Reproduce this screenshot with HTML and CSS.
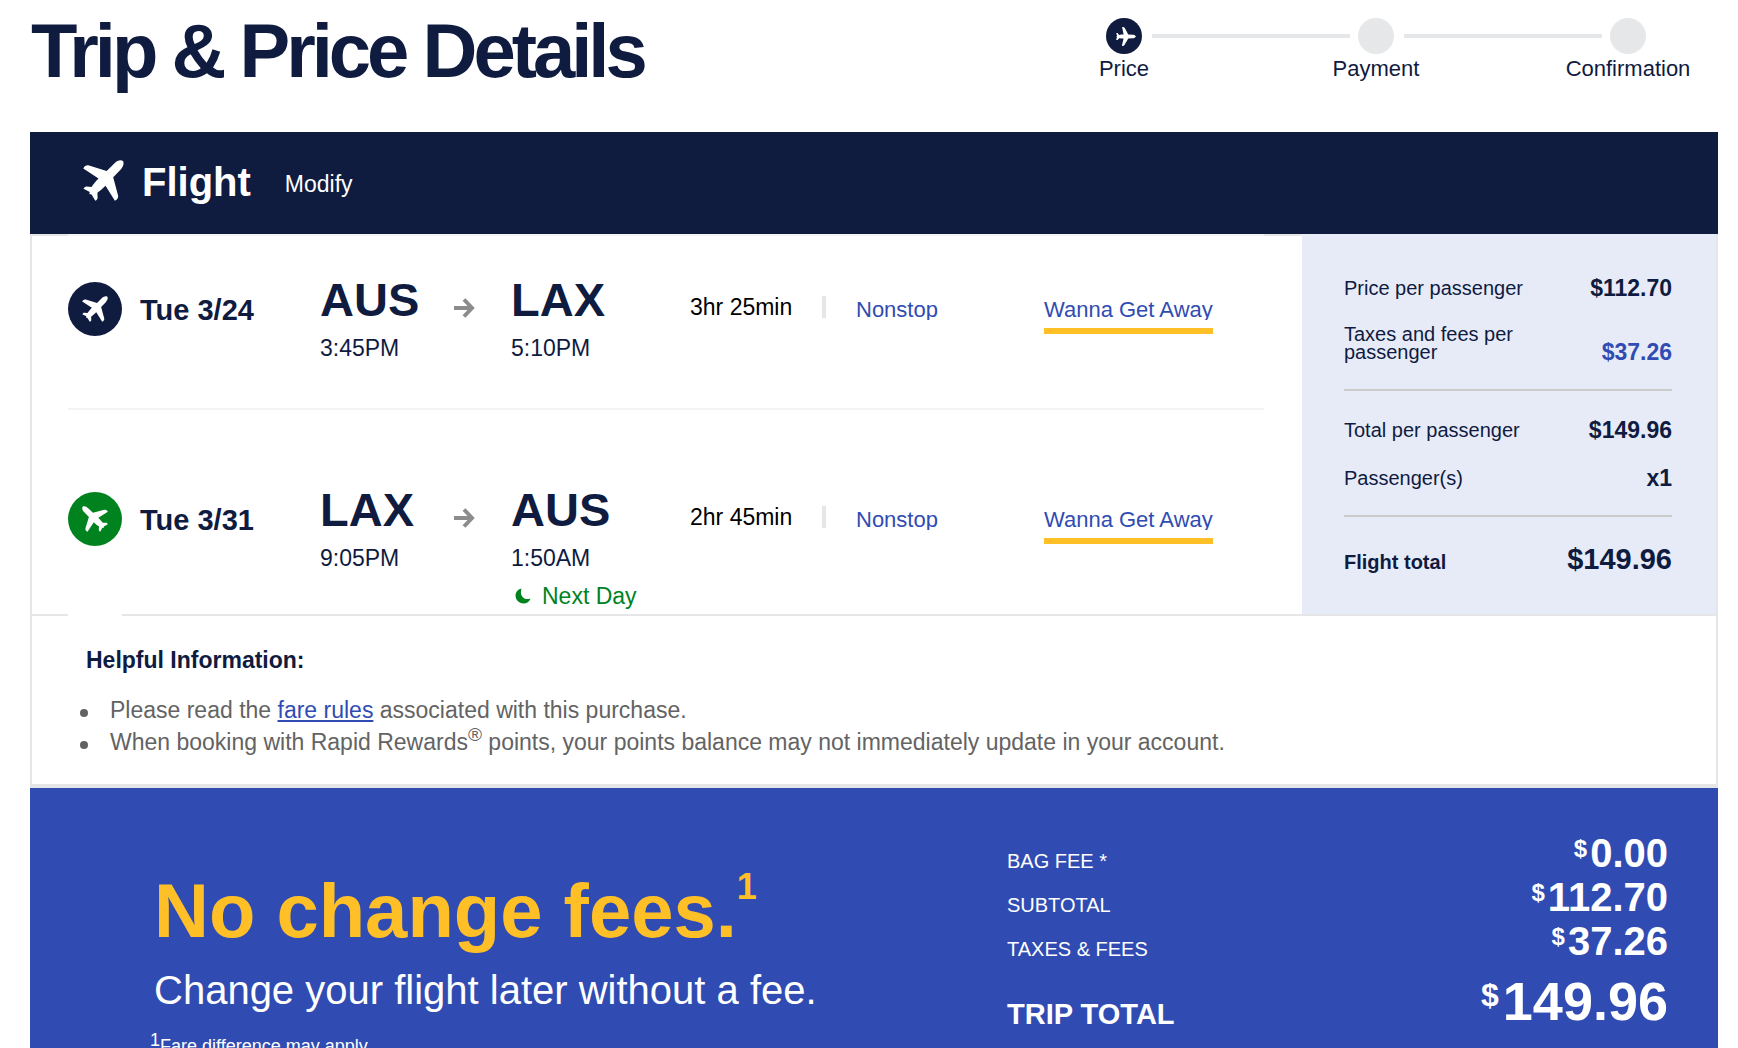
FILE: index.html
```html
<!DOCTYPE html>
<html lang="en">
<head>
  <meta charset="UTF-8">
  <meta name="viewport" content="width=device-width, initial-scale=1.0">
  <title>Trip &amp; Price Details</title>
  <link rel="stylesheet" href="styles.css">
</head>
<body>
  <!-- Shared icons -->
  <svg class="sprite" aria-hidden="true">
    <symbol id="plane" viewBox="0 0 41 41">
      <path d="M40 1C37.500 -.5 34 .8 31.500 3.300L23.700 10.900 6 5.500C3.500 4.900 1.500 6 .3 8.600L15.500 18.600C12.800 21.400 10.400 24.200 8.600 26.900L3.600 26.400C2.200 26.300 1.200 27.400 .5 28.800L6.800 32 6.300 34 8.600 34.500 12.300 40.700C13.800 39.900 14.700 38.900 14.600 37.500L14.400 32.700C17.200 30.700 19.900 28.300 22.500 25.700L31.900 40.800C34.300 39.600 35.600 37.700 35 35.200L30.200 17.300 37.500 9.700C40 7 41.400 3.500 40 1Z"/>
    </symbol>
  </svg>

  <header class="page-header">
    <h1>Trip &amp; Price Details</h1>
    <ol class="steps">
      <li class="step active">
        <span class="dot"><svg class="step-plane"><use href="#plane"/></svg></span>
        Price
      </li>
      <li class="line" aria-hidden="true"></li>
      <li class="step"><span class="dot"></span>Payment</li>
      <li class="line" aria-hidden="true"></li>
      <li class="step"><span class="dot"></span>Confirmation</li>
    </ol>
  </header>

  <main class="content">
    <div class="flight-bar">
      <svg class="bar-plane"><use href="#plane"/></svg>
      <h2>Flight</h2>
      <a href="#" class="modify">Modify</a>
    </div>

    <section class="card">
      <div class="summary">
        <div class="flights">
          <!-- Departing -->
          <article class="flight">
            <span class="badge"><svg><use href="#plane"/></svg></span>
            <h3 class="date">Tue 3/24</h3>
            <div class="stop">
              <div class="code">AUS</div>
              <div class="time">3:45PM</div>
            </div>
            <svg class="arrow" viewBox="0 0 22 22"><path d="M1 11H18M11 2.500 19 11 11 19.500"/></svg>
            <div class="stop">
              <div class="code">LAX</div>
              <div class="time">5:10PM</div>
            </div>
            <div class="duration">3hr 25min</div>
            <button class="link nonstop"><span>Nonstop</span></button>
            <button class="link fare"><span>Wanna Get Away</span></button>
          </article>

          <!-- Returning -->
          <article class="flight return">
            <span class="badge"><svg><use href="#plane"/></svg></span>
            <h3 class="date">Tue 3/31</h3>
            <div class="stop">
              <div class="code">LAX</div>
              <div class="time">9:05PM</div>
            </div>
            <svg class="arrow" viewBox="0 0 22 22"><path d="M1 11H18M11 2.500 19 11 11 19.500"/></svg>
            <div class="stop">
              <div class="code">AUS</div>
              <div class="time">1:50AM</div>
              <div class="next-day">
                <svg viewBox="0 0 16 16"><path d="M6.500 .5C2.500 1.500 .5 4.300 .5 7.600C.5 12 4 15.500 8.400 15.500C11.800 15.500 14.600 13.500 15.600 10.500C10 12.800 4 8.500 6.500 .5Z"/></svg>
                Next Day
              </div>
            </div>
            <div class="duration">2hr 45min</div>
            <button class="link nonstop"><span>Nonstop</span></button>
            <button class="link fare"><span>Wanna Get Away</span></button>
          </article>
        </div>

        <!-- Price panel -->
        <dl class="prices">
          <div class="price-row">
            <dt>Price per passenger</dt>
            <dd>$112.70</dd>
          </div>
          <div class="price-row">
            <dt>Taxes and fees per passenger</dt>
            <dd><a href="#">$37.26</a></dd>
          </div>
          <div class="price-row ruled">
            <dt>Total per passenger</dt>
            <dd>$149.96</dd>
          </div>
          <div class="price-row">
            <dt>Passenger(s)</dt>
            <dd>x1</dd>
          </div>
          <div class="price-row ruled flight-total">
            <dt>Flight total</dt>
            <dd>$149.96</dd>
          </div>
        </dl>
      </div>

      <div class="helpful">
        <h4>Helpful Information:</h4>
        <ul>
          <li>Please read the <a href="#">fare rules</a> associated with this purchase.</li>
          <li>When booking with Rapid Rewards<sup>®</sup> points, your points balance may not immediately update in your account.</li>
        </ul>
      </div>
    </section>

    <section class="total-bar">
      <div class="promo">
        <p class="promo-title">No change fees.<sup>1</sup></p>
        <p class="promo-sub">Change your flight later without a fee.</p>
        <p class="promo-note"><sup>1</sup>Fare difference may apply.</p>
      </div>
      <table class="totals">
        <tr><th scope="row">BAG FEE *</th><td><span>$</span>0.00</td></tr>
        <tr><th scope="row">SUBTOTAL</th><td><span>$</span>112.70</td></tr>
        <tr><th scope="row">TAXES &amp; FEES</th><td><span>$</span>37.26</td></tr>
        <tr class="trip-total"><th scope="row">TRIP TOTAL</th><td><span>$</span>149.96</td></tr>
      </table>
    </section>
  </main>
</body>
</html>
```
FILE: styles.css
```css
* {
  margin: 0;
  padding: 0;
  box-sizing: border-box;
}

body {
  font-family: "Liberation Sans", Arial, sans-serif;
  font-size: 23px;
  color: #0f1b3f;
  background: #fff;
  height: 100vh;
  overflow: hidden;
}

a, button {
  color: #304cb2;
  font-family: inherit;
}

ol, ul {
  list-style: none;
}

svg {
  display: block;
  fill: currentColor;
}

.sprite {
  display: none;
}

/* Header */
.page-header {
  display: flex;
  justify-content: space-between;
  align-items: flex-start;
  height: 132px;
  padding: 7px 48px 0 31px;
}

h1 {
  font-size: 76px;
  line-height: 88px;
  letter-spacing: -4px;
  white-space: nowrap;
}

.steps {
  display: grid;
  grid-template-columns: 124px 1fr 124px 1fr 124px;
  width: 628px;
  padding-top: 11px;
}

.step {
  display: flex;
  flex-direction: column;
  align-items: center;
  font-size: 22px;
  line-height: 30px;
}

.dot {
  display: flex;
  align-items: center;
  justify-content: center;
  width: 36px;
  height: 36px;
  border-radius: 50%;
  background: #e6e7e8;
  color: #fff;
}

.active .dot {
  background: #0f1b3f;
}

.step-plane {
  width: 17px;
  height: 17px;
  transform: rotate(45deg);
}

.line {
  height: 4px;
  margin: 16px -36px 0 -34px;
  background: #e6e7e8;
}

/* Flight card */
.content {
  margin: 0 20px 0 30px;
}

.flight-bar {
  display: flex;
  align-items: center;
  height: 102px;
  padding-left: 53px;
  background: #0f1b3f;
  color: #fff;
}

.bar-plane {
  width: 41px;
  height: 41px;
  margin-bottom: 6px;
}

h2 {
  margin: 0 34px 2px 18px;
  font-size: 40px;
}

.modify {
  color: #fff;
  text-decoration: none;
  padding-top: 2px;
}

.card {
  border: 2px solid #e6e6e6;
  border-top: 0;
  border-bottom-width: 4px;
}

.summary {
  display: flex;
  border-bottom: 2px solid #e6e6e6;
}

.flights {
  flex: 1;
  padding: 0 38px 0 36px;
  border-top: 2px solid #e6e6e6;
}

.flight {
  position: relative;
  display: grid;
  grid-template-columns: 72px 180px 133px 58px 179px 166px 188px 1fr;
  align-items: start;
  height: 174px;
  margin-top: -2px;
  padding-top: 37px;
  border-top: 2px solid #f4f4f4;
}

.return {
  height: 206px;
  margin-top: 0;
  padding-top: 73px;
}

/* Opens the bottom rule under the badge column */
.return::after {
  content: "";
  position: absolute;
  left: 0;
  bottom: -2px;
  width: 54px;
  height: 2px;
  background: #fff;
}

.badge {
  display: flex;
  align-items: center;
  justify-content: center;
  width: 54px;
  height: 54px;
  margin-top: 9px;
  border-radius: 50%;
  background: #0f1b3f;
  color: #fff;
}

.badge svg {
  width: 26px;
  height: 26px;
}

.return .badge {
  background: #00831f;
}

.return .badge svg {
  transform: rotate(-90deg);
}

.date {
  margin-top: 21px;
  font-size: 29px;
  line-height: 32px;
}

.code {
  font-size: 47px;
  font-weight: bold;
  line-height: 54px;
}

.time {
  margin-top: 7px;
  line-height: 28px;
}

.next-day {
  display: flex;
  align-items: center;
  gap: 11px;
  margin: 6px 0 0 4px;
  line-height: 36px;
  color: #00831f;
  white-space: nowrap;
}

.next-day svg {
  width: 16px;
  height: 16px;
}

.arrow {
  width: 22px;
  height: 22px;
  margin-top: 24px;
  fill: none;
  stroke: #8c8c8c;
  stroke-width: 4;
}

.duration {
  width: 136px;
  margin-top: 23px;
  border-right: 4px solid #e6e6e6;
  line-height: 22px;
  color: #000;
}

.link {
  justify-self: start;
  margin-top: 27px;
  border: 0;
  background: none;
  font-size: 22px;
  cursor: pointer;
}

.link span {
  display: block;
  line-height: 20px;
  overflow: hidden;
}

.fare {
  padding-bottom: 8px;
  border-bottom: 6px solid #ffbf27;
}

/* Price panel */
.prices {
  width: 414px;
  padding: 39px 44px 0 42px;
  background: #e7ebf8;
}

.price-row {
  display: flex;
  justify-content: space-between;
  align-items: flex-end;
  min-height: 48px;
  line-height: 18px;
}

.price-row:first-child {
  min-height: 24px;
}

.price-row dt {
  width: 200px;
  font-size: 20px;
}

.price-row dd {
  font-weight: bold;
}

.price-row a {
  text-decoration: none;
}

.price-row:nth-child(2) {
  min-height: 64px;
}

.ruled {
  margin-top: 28px;
  min-height: 50px;
  border-top: 2px solid #ccc;
}

.flight-total {
  min-height: 56px;
  font-weight: bold;
}

.flight-total dd {
  font-size: 29px;
  line-height: 24px;
}

/* Helpful information */
.helpful {
  height: 168px;
  padding: 30px 54px 0;
}

.helpful h4 {
  line-height: 28px;
}

.helpful ul {
  margin-top: 20px;
  padding-left: 24px;
  color: #636363;
}

.helpful li {
  line-height: 32px;
}

.helpful li::before {
  content: "";
  display: inline-block;
  width: 8px;
  height: 8px;
  margin: 0 22px 1px -30px;
  border-radius: 50%;
  background: #636363;
}

.helpful sup {
  font-size: 19px;
  line-height: 0;
}

/* Totals */
.total-bar {
  display: flex;
  justify-content: space-between;
  min-height: 300px;
  padding: 43px 50px 0 120px;
  background: #304cb2;
  color: #fff;
}

.promo {
  padding-top: 35px;
}

.promo sup {
  line-height: 0;
}

.promo-title {
  font-size: 76px;
  font-weight: bold;
  line-height: 90px;
  margin-left: 4px;
  color: #ffbf27;
}

.promo-title sup {
  font-size: 36px;
  vertical-align: 38px;
}

.promo-sub {
  margin: 10px 4px 20px;
  font-size: 40px;
  line-height: 48px;
}

.promo-note {
  font-size: 18px;
  line-height: 24px;
}

.promo-note sup {
  font-size: 18px;
  vertical-align: 6px;
}

.totals {
  width: 661px;
  align-self: flex-start;
  border-collapse: collapse;
}

.totals th {
  font-size: 20px;
  font-weight: normal;
  text-align: left;
  vertical-align: bottom;
  line-height: 28px;
}

.totals td {
  font-size: 40px;
  font-weight: bold;
  line-height: 44px;
  text-align: right;
}

.totals td span {
  margin-right: 3px;
  font-size: 24px;
  vertical-align: 10px;
  line-height: 0;
}

.totals .trip-total th {
  font-size: 29px;
  font-weight: bold;
  line-height: 50px;
}

.totals .trip-total td {
  font-size: 54px;
  line-height: 76px;
}

.totals .trip-total td span {
  margin-right: 4px;
  font-size: 32px;
  vertical-align: 14px;
}
```
